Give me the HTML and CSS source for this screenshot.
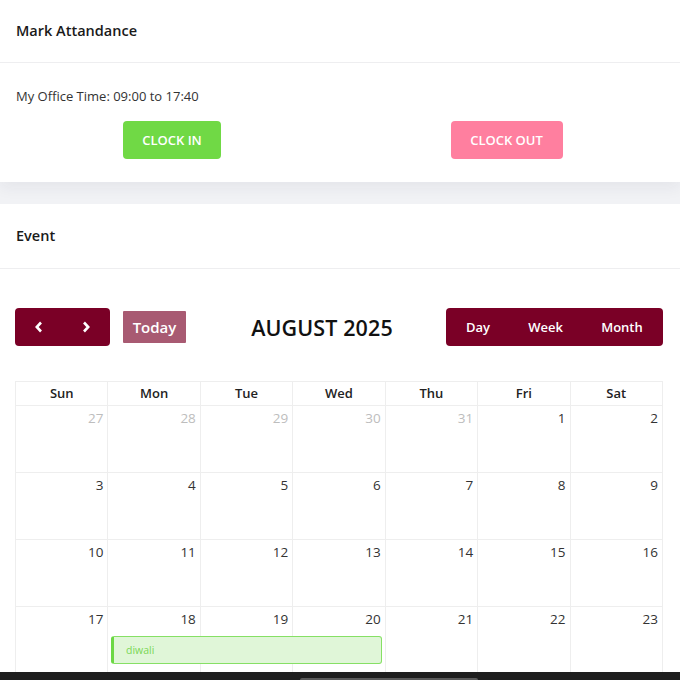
FILE: index.html
```html
<!DOCTYPE html>
<html lang="en">
<head>
    <meta charset="UTF-8">
    <meta name="viewport" content="width=device-width, initial-scale=1.0">
    <title>Attendance</title>
    <link rel="stylesheet" href="styles.css">
</head>
<body>
    <div class="card attendance">
        <div class="card-header">Mark Attandance</div>
        <div class="card-body">
            <p class="office-time">My Office Time: 09:00 to 17:40</p>
            <div class="clock-row">
                <div class="clock-col"><button class="btn-clock in">CLOCK IN</button></div>
                <div class="clock-col"><button class="btn-clock out">CLOCK OUT</button></div>
            </div>
        </div>
    </div>

    <div class="card event">
        <div class="card-header tall">Event</div>
        <div class="card-body cal-body">
            <div class="toolbar">
                <div class="tb-left">
                    <div class="btn-group nav">
                        <button class="btn-cal">
                            <svg width="12" height="14" viewBox="0 0 12 14"><path d="M8 2.5 3.8 7 8 11.5" fill="none" stroke="#fff" stroke-width="2.6"/></svg>
                        </button>
                        <button class="btn-cal">
                            <svg width="12" height="14" viewBox="0 0 12 14"><path d="M4 2.5 8.2 7 4 11.5" fill="none" stroke="#fff" stroke-width="2.6"/></svg>
                        </button>
                    </div>
                    <button class="btn-today">Today</button>
                </div>
                <h2 class="cal-title">AUGUST 2025</h2>
                <div class="btn-group views">
                    <button class="btn-cal">Day</button>
                    <button class="btn-cal">Week</button>
                    <button class="btn-cal">Month</button>
                </div>
            </div>

            <div class="calendar">
                <div class="dow">Sun</div>
                <div class="dow">Mon</div>
                <div class="dow">Tue</div>
                <div class="dow">Wed</div>
                <div class="dow">Thu</div>
                <div class="dow">Fri</div>
                <div class="dow">Sat</div>

                <div class="day other">27</div>
                <div class="day other">28</div>
                <div class="day other">29</div>
                <div class="day other">30</div>
                <div class="day other">31</div>
                <div class="day">1</div>
                <div class="day">2</div>

                <div class="day">3</div>
                <div class="day">4</div>
                <div class="day">5</div>
                <div class="day">6</div>
                <div class="day">7</div>
                <div class="day">8</div>
                <div class="day">9</div>

                <div class="day">10</div>
                <div class="day">11</div>
                <div class="day">12</div>
                <div class="day">13</div>
                <div class="day">14</div>
                <div class="day">15</div>
                <div class="day">16</div>

                <div class="day">17</div>
                <div class="day">18</div>
                <div class="day">19</div>
                <div class="day">20</div>
                <div class="day">21</div>
                <div class="day">22</div>
                <div class="day">23</div>

                <div class="cal-event">diwali</div>
            </div>
        </div>
    </div>

    <div class="bottom-bar"><div class="thumb"></div></div>
</body>
</html>
```

FILE: styles.css
```css
body {
    margin: 0;
    font-family: "Open Sans", "Noto Sans", sans-serif;
    background: #f1f2f5;
    color: #222;
    overflow: hidden;
}
.card {
    background: #fff;
}
.attendance {
    box-shadow: 0 6px 14px rgba(30, 40, 70, 0.06);
    margin-bottom: 22px;
}
.card-header {
    height: 62px;
    line-height: 62px;
    padding: 0 16px;
    font-size: 14.5px;
    font-weight: 600;
    color: #1a1a1a;
    border-bottom: 1px solid #eeeef0;
}
.card-header.tall {
    height: 64px;
    line-height: 64px;
}
.card-body {
    padding: 24px 16px 23px;
}
.office-time {
    margin: 0 0 16px;
    font-size: 13px;
    color: #333;
}
.clock-row {
    display: flex;
}
.clock-col {
    flex: 1;
    display: flex;
    justify-content: center;
}
.btn-clock {
    border: none;
    border-radius: 4px;
    height: 38px;
    color: #fff;
    font-family: inherit;
    font-size: 13px;
    font-weight: 600;
}
.btn-clock.in {
    background: #70d945;
    width: 98px;
    margin-left: -12px;
}
.btn-clock.out {
    background: #ff7f9f;
    width: 112px;
    margin-left: 9px;
}
.cal-body {
    padding: 39px 17px 0 15px;
}
.toolbar {
    display: flex;
    align-items: center;
    justify-content: space-between;
    margin-bottom: 35px;
}
.tb-left {
    display: flex;
    align-items: center;
    gap: 13px;
}
.btn-group {
    display: flex;
    background: #7a0026;
    border-radius: 4px;
    height: 38px;
}
.btn-cal {
    background: none;
    border: none;
    color: #fff;
    font-family: inherit;
    font-size: 13px;
    font-weight: 600;
    cursor: pointer;
}
.nav {
    width: 95px;
}
.nav .btn-cal {
    flex: 1;
    padding: 0;
    display: flex;
    align-items: center;
    justify-content: center;
}
.views {
    width: 217px;
}
.views .btn-cal:nth-child(1) { width: 64px; }
.views .btn-cal:nth-child(2) { width: 71px; }
.views .btn-cal:nth-child(3) { width: 82px; }
.btn-today {
    background: #a85a72;
    border: none;
    border-radius: 1px;
    width: 63px;
    height: 32px;
    color: #fff;
    font-family: inherit;
    font-size: 15px;
    font-weight: 600;
    padding: 0;
}
.cal-title {
    margin: 0 0 0 12px;
    font-size: 21.5px;
    font-weight: 600;
    color: #111;
    letter-spacing: 0.1px;
}
.calendar {
    position: relative;
    display: grid;
    grid-template-columns: repeat(7, 1fr);
    grid-template-rows: 24px repeat(4, 67px);
    border-top: 1px solid #eeeeee;
    border-left: 1px solid #eeeeee;
}
.dow {
    border-right: 1px solid #eeeeee;
    border-bottom: 1px solid #eeeeee;
    text-align: center;
    font-size: 13px;
    font-weight: 600;
    line-height: 22px;
    color: #222;
}
.day {
    border-right: 1px solid #eeeeee;
    border-bottom: 1px solid #eeeeee;
    text-align: right;
    padding: 3px 4px 0 0;
    font-size: 13.5px;
    color: #333;
}
.day.other {
    color: #bdbdbd;
}
.cal-event {
    position: absolute;
    left: 95px;
    top: 254px;
    width: 255px;
    height: 26px;
    line-height: 26px;
    background: #e0f6d8;
    border: 1px solid #86e065;
    border-left: 3px solid #6bd843;
    border-radius: 3px;
    padding-left: 12px;
    font-size: 10.5px;
    color: #7ad655;
}
.bottom-bar {
    position: fixed;
    left: 0;
    right: 0;
    bottom: 0;
    height: 8px;
    background: #1e1e1e;
}
.thumb {
    position: absolute;
    left: 300px;
    width: 178px;
    bottom: 0;
    height: 2px;
    background: #5a5a5a;
    border-radius: 2px 2px 0 0;
}
```
